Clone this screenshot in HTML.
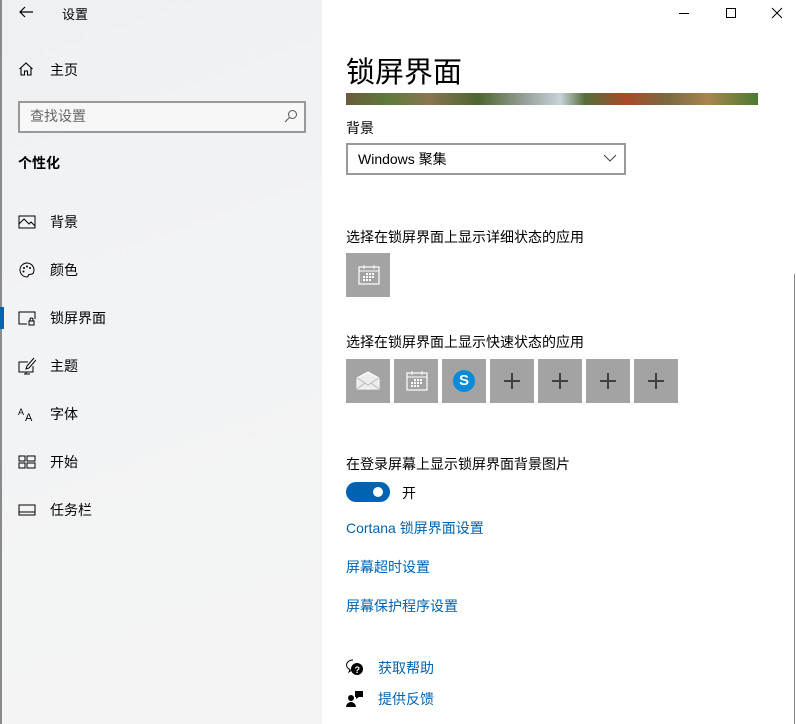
<!DOCTYPE html>
<html><head><meta charset="utf-8"><style>
*{margin:0;padding:0;box-sizing:border-box}
body{width:796px;height:724px;overflow:hidden;background:#fff;font-family:"Liberation Sans","Noto Sans CJK SC",sans-serif;color:#000;position:relative;font-size:14px}
.side{position:absolute;left:0;top:0;width:322px;height:724px;background:linear-gradient(160deg,#eef0f2 0%,#f2f3f4 40%,#f4f4f4 100%)}
.a{position:absolute;white-space:nowrap}
.nav{position:absolute;left:18px;display:flex;align-items:center}
.nav svg{width:18px;height:18px;margin-right:14px}
.nav span{font-size:14px}
.tile{position:absolute;top:359px;width:44px;height:44px;background:#a3a3a3}
.plus:before,.plus:after{content:"";position:absolute;background:#404040}
.plus:before{left:14px;top:21px;width:16px;height:1.5px}
.plus:after{left:21px;top:14px;width:1.5px;height:16px}
.link{color:#0063b1;font-size:14px}
</style></head><body>
<div class="side">
<div class="a" style="left:0;top:0;width:2px;height:724px;background:#8a8a8a"></div>
<svg class="a" style="left:18px;top:5px" width="16" height="14" viewBox="0 0 16 14"><path d="M15 7H2M7 2L2 7l5 5" stroke="#000" fill="none" stroke-width="1.2"/></svg>
<div class="a" style="left:62px;top:4px;font-size:13px">设置</div>
<svg class="a" style="left:18px;top:61px" width="16" height="16" viewBox="0 0 16 16"><path d="M1.5 8L8 2l6.5 6M3 7v7h3.5v-4h3v4H13V7" stroke="#000" fill="none" stroke-width="1.1"/></svg>
<div class="a" style="left:50px;top:60px">主页</div>
<div class="a" style="left:18px;top:101px;width:288px;height:32px;border:2px solid #999;background:#f7f7f7"></div>
<div class="a" style="left:30px;top:106px;color:#666">查找设置</div>
<svg class="a" style="left:284px;top:109px" width="14" height="14" viewBox="0 0 14 14"><circle cx="8.5" cy="5.5" r="4" stroke="#555" fill="none"/><path d="M5.5 8.5L1 13" stroke="#555"/></svg>
<div class="a" style="left:18px;top:153px;font-weight:bold">个性化</div>
<div class="nav" style="top:212px"><svg viewBox="0 0 18 18"><rect x="1" y="3" width="16" height="12" stroke="#000" fill="none"/><path d="M1 11l5-5 5 5 2-2 4 4" stroke="#000" fill="none"/></svg><span>背景</span></div>
<div class="nav" style="top:260px"><svg viewBox="0 0 18 18"><path d="M9 2a7 7 0 1 0 0 14c1.5 0 1-2 2-2.5s4 .5 4.5-2A7 7 0 0 0 9 2z" stroke="#000" fill="none"/><circle cx="6" cy="7" r="1" fill="#000"/><circle cx="9" cy="5.5" r="1" fill="#000"/><circle cx="12" cy="7" r="1" fill="#000"/><circle cx="5.5" cy="10.5" r="1" fill="#000"/></svg><span>颜色</span></div>
<div class="a" style="left:0;top:307px;width:4px;height:22px;background:#0063b1"></div>
<div class="nav" style="top:308px"><svg viewBox="0 0 18 18"><path d="M9 15H1V3h16v7" stroke="#000" fill="none"/><rect x="11" y="12" width="5" height="4" stroke="#000" fill="none"/><path d="M12 12v-1.5a1.5 1.5 0 0 1 3 0V12" stroke="#000" fill="none"/></svg><span>锁屏界面</span></div>
<div class="nav" style="top:356px"><svg viewBox="0 0 18 18"><path d="M10 5H1v10h14V9M6 17h6M8 15v2" stroke="#000" fill="none"/><path d="M16 1L9 9l-1 3 3-1 7-8" stroke="#000" fill="none"/></svg><span>主题</span></div>
<div class="nav" style="top:404px"><svg viewBox="0 0 18 18"><text x="0" y="10" font-size="9" font-family="Liberation Sans">A</text><text x="7" y="16" font-size="11" font-family="Liberation Sans">A</text></svg><span>字体</span></div>
<div class="nav" style="top:452px"><svg viewBox="0 0 18 18"><rect x="1" y="3" width="6" height="5" stroke="#000" fill="none"/><rect x="9" y="3" width="8" height="5" stroke="#000" fill="none"/><rect x="1" y="10" width="6" height="5" stroke="#000" fill="none"/><rect x="9" y="10" width="8" height="5" stroke="#000" fill="none"/></svg><span>开始</span></div>
<div class="nav" style="top:500px"><svg viewBox="0 0 18 18"><rect x="1" y="4" width="16" height="10" stroke="#000" fill="none"/><path d="M1 11h16" stroke="#000"/></svg><span>任务栏</span></div>
</div>
<svg class="a" style="left:676px;top:6px" width="110" height="14" viewBox="0 0 110 14"><path d="M3 7.5h10" stroke="#000"/><rect x="50.5" y="2.5" width="9" height="9" stroke="#000" fill="none"/><path d="M96 2l10 10M106 2L96 12" stroke="#000"/></svg>
<div class="a" style="left:346px;top:49px;font-size:29px">锁屏界面</div>
<div class="a" style="left:346px;top:93px;width:412px;height:12px;background:linear-gradient(90deg,#6b5a3c,#5d7a3a 10%,#8a7550 20%,#4e6530 32%,#9fa9a5 45%,#c7d3d8 52%,#566e3a 58%,#a84a2a 68%,#7b6a40 78%,#a88450 88%,#4a7a30 100%)"></div>
<div class="a" style="left:346px;top:118px">背景</div>
<div class="a" style="left:346px;top:143px;width:280px;height:32px;border:2px solid #999"></div>
<div class="a" style="left:358px;top:149px">Windows 聚集</div>
<svg class="a" style="left:603px;top:154px" width="14" height="9" viewBox="0 0 14 9"><path d="M1 1l6 6 6-6" stroke="#444" fill="none"/></svg>
<div class="a" style="left:346px;top:227px">选择在锁屏界面上显示详细状态的应用</div>
<div class="tile" style="top:253px;left:346px"></div>
<svg class="a" style="left:357px;top:263px" width="24" height="24" viewBox="0 0 24 24"><rect x="2" y="4" width="20" height="17" stroke="#fff" fill="none" stroke-width="1.2"/><path d="M2 8h20M7 2v4M17 2v4" stroke="#fff"/><g fill="#fff"><rect x="9" y="10" width="2" height="2"/><rect x="12" y="10" width="2" height="2"/><rect x="15" y="10" width="2" height="2"/><rect x="6" y="13" width="2" height="2"/><rect x="9" y="13" width="2" height="2"/><rect x="12" y="13" width="2" height="2"/><rect x="15" y="13" width="2" height="2"/><rect x="6" y="16" width="2" height="2"/><rect x="9" y="16" width="2" height="2"/><rect x="12" y="16" width="2" height="2"/></g></svg>
<div class="a" style="left:346px;top:332px">选择在锁屏界面上显示快速状态的应用</div>
<div class="tile" style="left:346px"></div>
<svg class="a" style="left:356px;top:369px" width="24" height="24" viewBox="0 0 24 24"><path d="M1 9L12 3l11 6v11H1z" stroke="#fff" fill="#ececec" stroke-width="1"/><path d="M1 9l11 7 11-7M1 20l8-6M23 20l-8-6" stroke="#bbb" fill="none"/></svg>
<div class="tile" style="left:394px"></div>
<svg class="a" style="left:405px;top:369px" width="24" height="24" viewBox="0 0 24 24"><rect x="2" y="4" width="20" height="17" stroke="#fff" fill="none" stroke-width="1.2"/><path d="M2 8h20M7 2v4M17 2v4" stroke="#fff"/><g fill="#fff"><rect x="9" y="10" width="2" height="2"/><rect x="12" y="10" width="2" height="2"/><rect x="15" y="10" width="2" height="2"/><rect x="6" y="13" width="2" height="2"/><rect x="9" y="13" width="2" height="2"/><rect x="12" y="13" width="2" height="2"/><rect x="15" y="13" width="2" height="2"/><rect x="6" y="16" width="2" height="2"/><rect x="9" y="16" width="2" height="2"/><rect x="12" y="16" width="2" height="2"/></g></svg>
<div class="tile" style="left:442px"></div>
<div class="a" style="left:453px;top:370px;width:22px;height:22px;border-radius:50%;background:#0a8ad8;color:#fff;font-weight:bold;font-size:15px;text-align:center;line-height:22px">S</div>
<div class="tile plus" style="left:490px"></div>
<div class="tile plus" style="left:538px"></div>
<div class="tile plus" style="left:586px"></div>
<div class="tile plus" style="left:634px"></div>
<div class="a" style="left:346px;top:454px">在登录屏幕上显示锁屏界面背景图片</div>
<div class="a" style="left:346px;top:482px;width:44px;height:20px;border-radius:10px;background:#0063b1"></div>
<div class="a" style="left:373px;top:487px;width:10px;height:10px;border-radius:50%;background:#fff"></div>
<div class="a" style="left:402px;top:483px">开</div>
<div class="a link" style="left:346px;top:518px">Cortana 锁屏界面设置</div>
<div class="a link" style="left:346px;top:557px">屏幕超时设置</div>
<div class="a link" style="left:346px;top:596px">屏幕保护程序设置</div>
<svg class="a" style="left:346px;top:659px" width="18" height="18" viewBox="0 0 18 18"><path d="M7 1a6 5 0 0 0-3 9.5L3 13l3-2" stroke="#000" fill="none"/><circle cx="11" cy="10" r="6" fill="#000"/><text x="8.5" y="14" font-size="9" fill="#fff" font-weight="bold" font-family="Liberation Sans">?</text></svg>
<div class="a link" style="left:378px;top:658px">获取帮助</div>
<svg class="a" style="left:346px;top:690px" width="18" height="18" viewBox="0 0 18 18"><circle cx="5" cy="8" r="3" fill="#000"/><path d="M0 17a5 5 0 0 1 10 0z" fill="#000"/><path d="M9 1h8v6h-4l-3 2V7H9z" fill="#000"/></svg>
<div class="a link" style="left:378px;top:689px">提供反馈</div>
<div class="a" style="left:794px;top:274px;width:1px;height:450px;background:#888"></div>
</body></html>
